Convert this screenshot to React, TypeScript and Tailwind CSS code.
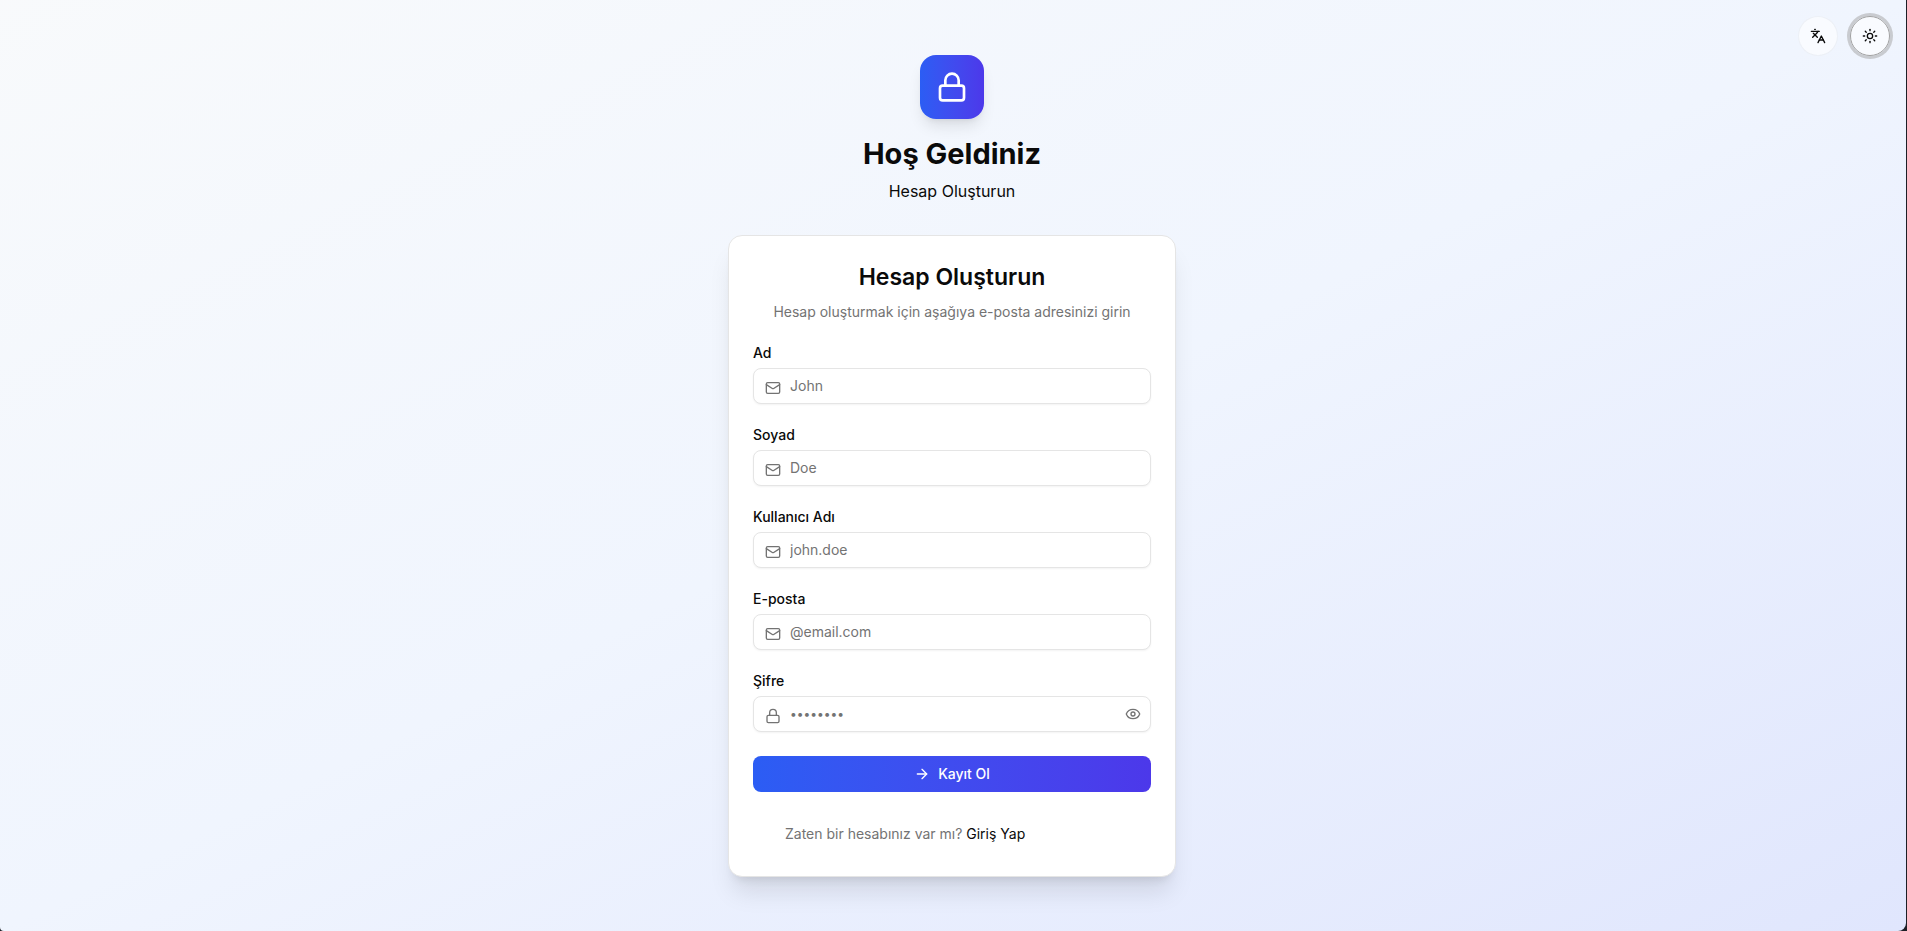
import { useState } from "react";
import { ArrowRight, Eye, Languages, Lock, Mail, Sun } from "lucide-react";

const fields = [
  { id: "first-name", label: "Ad", placeholder: "John", type: "text" },
  { id: "last-name", label: "Soyad", placeholder: "Doe", type: "text" },
  { id: "username", label: "Kullanıcı Adı", placeholder: "john.doe", type: "text" },
  { id: "email", label: "E-posta", placeholder: "@email.com", type: "email" },
  { id: "password", label: "Şifre", placeholder: "••••••••", type: "password" },
];

function Field({ id, label, placeholder, type }: (typeof fields)[number]) {
  const [visible, setVisible] = useState(false);
  const isPassword = type === "password";
  const Icon = isPassword ? Lock : Mail;
  return (
    <div className="flex flex-col gap-2">
      <label htmlFor={id} className="text-sm leading-none font-medium">
        {label}
      </label>
      <div className="relative">
        <Icon className="pointer-events-none absolute top-3 left-3 size-4 text-neutral-500" />
        <input
          id={id}
          type={isPassword && visible ? "text" : type}
          placeholder={placeholder}
          className={`block h-9 w-full rounded-lg border border-neutral-200 bg-white pr-10 pl-9 shadow-xs outline-none placeholder:text-neutral-500 ${isPassword ? "text-xs" : "text-sm"}`}
        />
        {isPassword && (
          <button
            type="button"
            aria-label="Şifreyi göster"
            onClick={() => setVisible(!visible)}
            className="absolute inset-y-0 right-0 flex items-center px-2.5 text-neutral-500"
          >
            <Eye className="size-4" />
          </button>
        )}
      </div>
    </div>
  );
}

export default function App() {
  return (
    <div className="min-h-screen bg-[#1c1f26] pr-px font-['Inter',sans-serif] text-neutral-950">
      <div className="relative flex min-h-screen items-center justify-center rounded-br-lg rounded-bl-sm bg-linear-to-br from-slate-50 via-[#f0f5fe] to-[#e0e6fd] pr-[18px] pl-4">
        <div className="absolute top-4 right-4 flex gap-3">
          <button
            type="button"
            aria-label="Dil"
            className="flex size-10 items-center justify-center rounded-full border border-neutral-200/30 bg-white/60 bg-clip-padding"
          >
            <Languages className="size-4" />
          </button>
          <button
            type="button"
            aria-label="Tema"
            className="flex size-10 items-center justify-center rounded-full border border-neutral-400 bg-white/60 ring-3 ring-neutral-400/50"
          >
            <Sun className="size-4" />
          </button>
        </div>

        <main className="w-full max-w-md">
          <header className="mb-8 flex flex-col items-center">
            <div className="mb-4 flex size-16 items-center justify-center rounded-2xl bg-linear-to-r from-[#2b5df4] to-[#4c38ea] shadow-lg">
              <Lock className="size-8 text-white" />
            </div>
            <h1 className="mb-1.5 text-[29px] leading-[38px] font-bold">Hoş Geldiniz</h1>
            <p className="text-base">Hesap Oluşturun</p>
          </header>

          <section className="rounded-[14px] border border-neutral-200 bg-white p-6 shadow-xl">
            <div className="mb-6 text-center">
              <h2 className="mb-2 text-[23px] leading-[34px] font-semibold">Hesap Oluşturun</h2>
              <p className="text-sm text-neutral-500">
                Hesap oluşturmak için aşağıya e-posta adresinizi girin
              </p>
            </div>
            <form className="flex flex-col gap-6" onSubmit={(e) => e.preventDefault()}>
              {fields.map((field) => (
                <Field key={field.id} {...field} />
              ))}
              <button
                type="submit"
                className="flex h-9 items-center justify-center gap-2 rounded-lg bg-linear-to-r from-[#2b5df4] to-[#4c38ea] text-sm font-medium text-white"
              >
                <ArrowRight className="size-4" />
                Kayıt Ol
              </button>
            </form>
            <p className="mt-8 mb-2 pl-8 text-sm text-neutral-500">
              Zaten bir hesabınız var mı?{" "}
              <a href="#login" className="text-neutral-950">
                Giriş Yap
              </a>
            </p>
          </section>
        </main>
      </div>
    </div>
  );
}
